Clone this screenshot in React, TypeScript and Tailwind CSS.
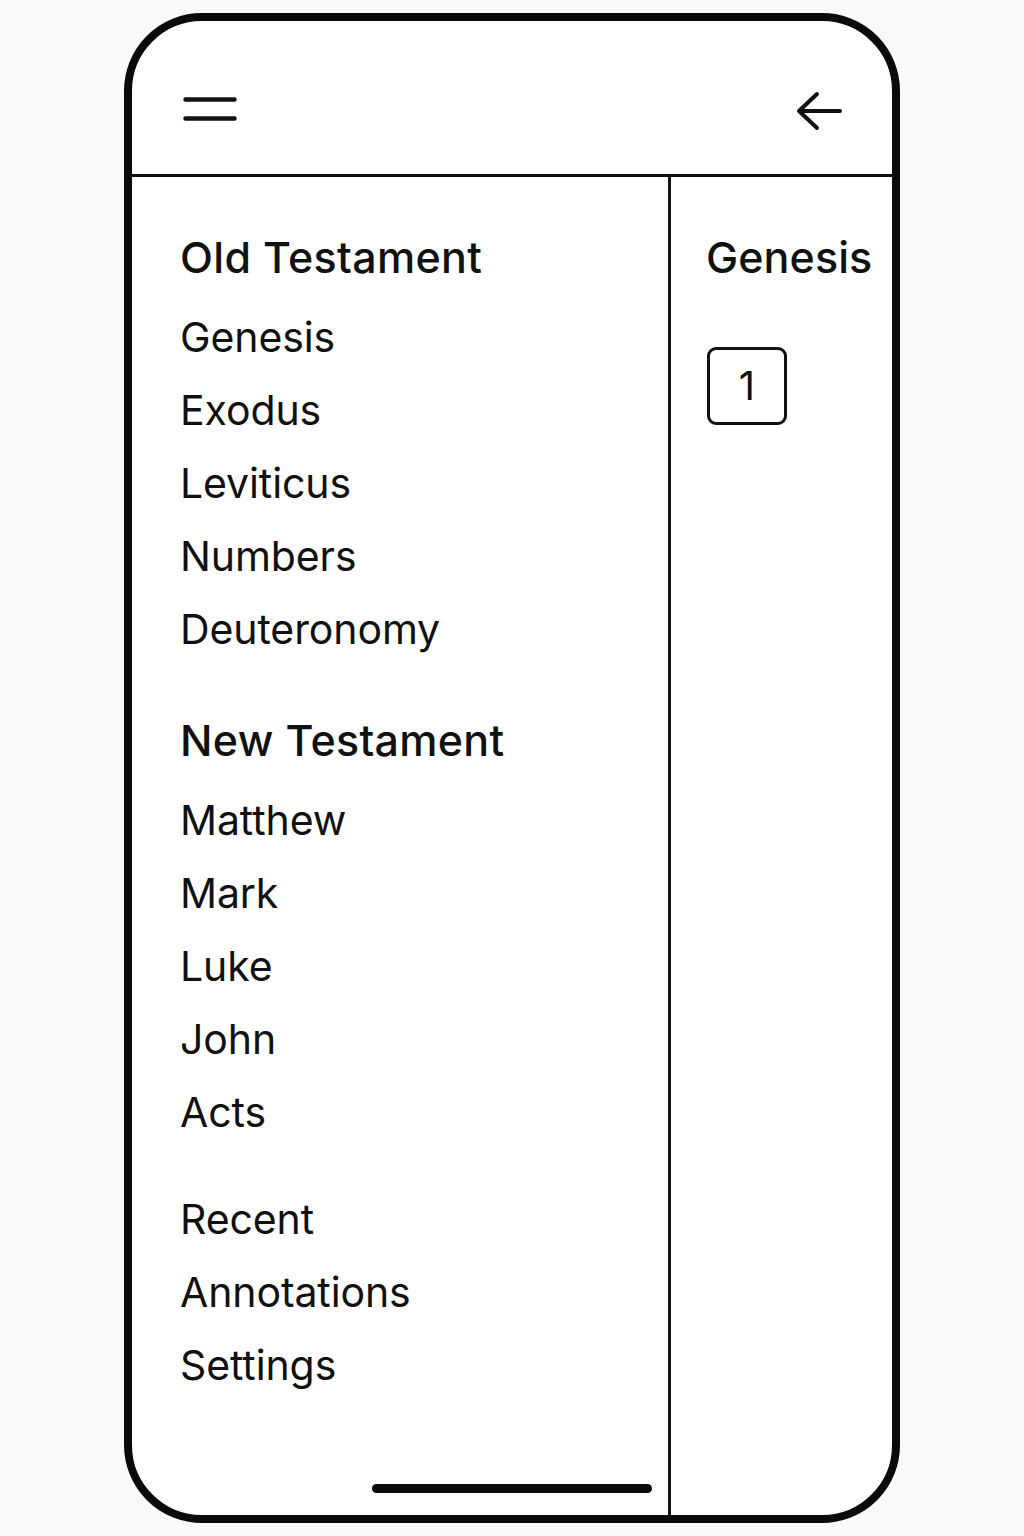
const sections = [
  { title: 'Old Testament', books: ['Genesis', 'Exodus', 'Leviticus', 'Numbers', 'Deuteronomy'] },
  { title: 'New Testament', books: ['Matthew', 'Mark', 'Luke', 'John', 'Acts'] },
]

const extras = ['Recent', 'Annotations', 'Settings']

function MenuIcon() {
  return (
    <svg width="54" height="24" viewBox="0 0 54 24" fill="none" stroke="#111" strokeWidth="4.5" strokeLinecap="round">
      <path d="M2.5 2.5H51.5M2.5 21.5H51.5" />
    </svg>
  )
}

function BackIcon() {
  return (
    <svg width="50" height="42" viewBox="0 0 50 42" fill="none" stroke="#111" strokeWidth="4" strokeLinecap="round" strokeLinejoin="round">
      <path d="M22 4L4 21L22 38M4 21H45" />
    </svg>
  )
}

export default function App() {
  return (
    <main
      className="min-h-screen w-full bg-[#f9f9f9] pt-[13px] pl-[124px]"
      style={{ fontFamily: 'Inter, "Noto Sans", sans-serif' }}
    >
      <div className="relative flex h-[1510px] w-[776px] flex-col overflow-hidden rounded-[78px] border-[8px] border-[#0a0a0a] bg-white text-[#111]">
        {/* Header */}
        <header className="flex h-[156px] shrink-0 items-start justify-between border-b-[3px] border-[#111] pl-[51px] pr-[47px]">
          <div className="mt-[76px]">
            <MenuIcon />
          </div>
          <div className="mt-[69px]">
            <BackIcon />
          </div>
        </header>

        {/* Body */}
        <div className="flex min-h-0 flex-1">
          {/* Book list */}
          <nav className="w-[539px] shrink-0 border-r-[3px] border-[#111] pl-[48px] pt-[44px]">
            {sections.map((section, i) => (
              <section key={section.title} className={i > 0 ? 'mt-[38px]' : ''}>
                <h2 className="mb-[7px] text-[43px] font-medium leading-[73px] tracking-[0.3px]">{section.title}</h2>
                <ul>
                  {section.books.map((book) => (
                    <li key={book} className="text-[41px] leading-[73px] tracking-[-0.1px]">
                      {book}
                    </li>
                  ))}
                </ul>
              </section>
            ))}
            <ul className="mt-[34px]">
              {extras.map((item) => (
                <li key={item} className="text-[41px] leading-[73px] tracking-[-0.1px]">
                  {item}
                </li>
              ))}
            </ul>
          </nav>

          {/* Chapters */}
          <div className="flex-1 pl-[35px] pt-[44px]">
            <h2 className="text-[43px] font-medium leading-[73px] tracking-[0.1px]">Genesis</h2>
            <div className="mt-[53px] ml-[1px] flex h-[78px] w-[80px] items-center justify-center rounded-[9px] border-[3px] border-[#111] text-[40px]">
              1
            </div>
          </div>
        </div>

        {/* Home indicator */}
        <div className="absolute bottom-[22px] left-1/2 h-[9px] w-[280px] -translate-x-1/2 rounded-full bg-[#0a0a0a]" />
      </div>
    </main>
  )
}
